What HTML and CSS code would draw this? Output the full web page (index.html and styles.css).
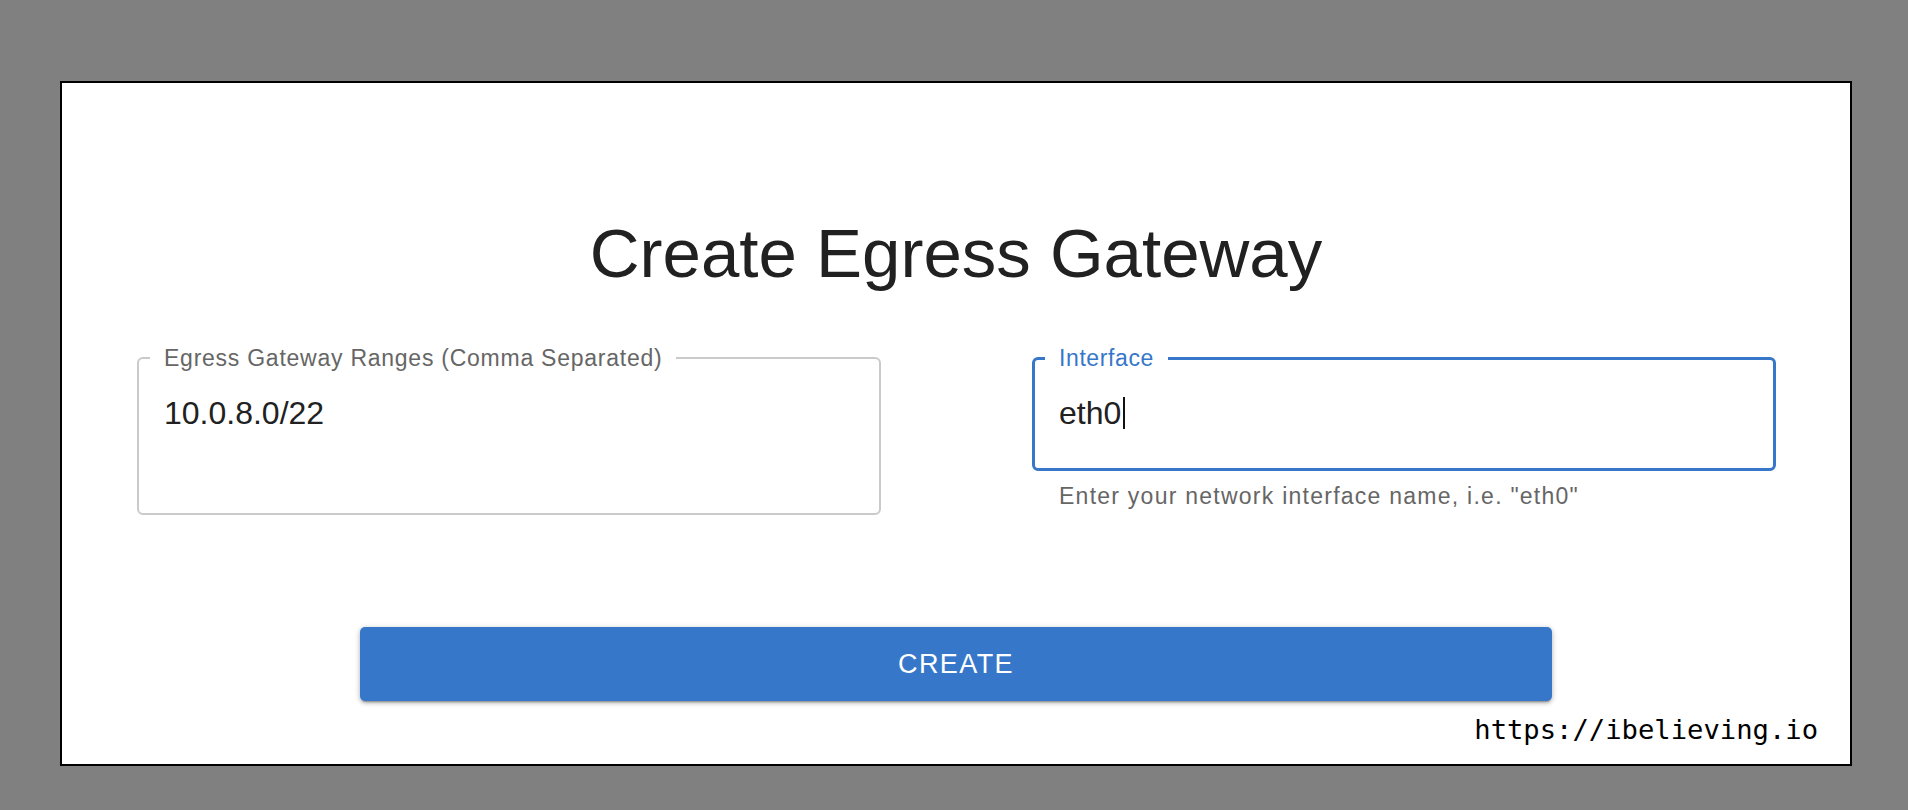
FILE: index.html
```html
<!DOCTYPE html>
<html lang="en">
<head>
<meta charset="utf-8">
<title>Create Egress Gateway</title>
<link rel="stylesheet" href="styles.css">
</head>
<body>
<main class="panel">
  <h1 class="title">Create Egress Gateway</h1>
  <div class="fields">
    <div class="field-wrap">
      <div class="field field-multi">
        <span class="label">Egress Gateway Ranges (Comma Separated)</span>
        <div class="value">10.0.8.0/22</div>
      </div>
    </div>
    <div class="field-wrap">
      <div class="field field-focused">
        <span class="label label-focused">Interface</span>
        <div class="value">eth0<span class="caret"></span></div>
      </div>
      <p class="helper">Enter your network interface name, i.e. "eth0"</p>
    </div>
  </div>
  <div class="actions">
    <button class="btn" type="button">CREATE</button>
  </div>
  <div class="watermark">https://ibelieving.io</div>
</main>
</body>
</html>
```

FILE: styles.css
```css
* { box-sizing: border-box; }

html, body {
  margin: 0;
  padding: 0;
}

body {
  background: #808080;
  width: 1908px;
  height: 810px;
  padding: 81px 56px 0 60px;
  font-family: "Liberation Sans", Arial, Helvetica, sans-serif;
  overflow: hidden;
}

.panel {
  width: 1792px;
  height: 685px;
  background: #fff;
  border: 2px solid #000;
  padding: 136px 32px 0 75px;
  display: flex;
  flex-direction: column;
}

.title {
  margin: 0 -32px 0 -75px;
  font-size: 69px;
  line-height: 70px;
  font-weight: 400;
  color: #212121;
  text-align: center;
}

.fields {
  margin-top: 68px;
  display: flex;
  gap: 151px;
  align-items: flex-start;
  width: 1639px;
}

.field-wrap {
  width: 744px;
  display: flex;
  flex-direction: column;
}

.field {
  position: relative;
  border: 2px solid #cacaca;
  border-radius: 6px;
  padding: 36px 25px 0;
}

.field-multi {
  height: 158px;
}

.field-focused {
  height: 114px;
  border: 3px solid #3677c9;
  padding: 35px 24px 0;
}

.label {
  position: absolute;
  top: -14px;
  left: 11px;
  padding: 0 14px;
  background: #fff;
  font-size: 23px;
  line-height: 26px;
  letter-spacing: 0.75px;
  color: #666;
  white-space: nowrap;
}

.label-focused {
  top: -15px;
  left: 10px;
  color: #3677c9;
  letter-spacing: 0.6px;
}

.value {
  font-size: 32px;
  line-height: 36px;
  color: #212121;
  display: flex;
  align-items: center;
}

.caret {
  display: inline-block;
  width: 2px;
  height: 32px;
  background: #111;
  margin-left: 2px;
}

.helper {
  margin: 12px 0 0;
  padding-left: 27px;
  font-size: 23px;
  line-height: 26px;
  letter-spacing: 1.25px;
  color: #666;
}

.actions {
  margin-top: 112px;
  display: flex;
  justify-content: center;
  margin-left: -75px;
  margin-right: -32px;
}

.btn {
  width: 1192px;
  height: 74px;
  border: none;
  border-radius: 5px;
  background: #3677c9;
  color: #fff;
  font-family: "Liberation Sans", Arial, Helvetica, sans-serif;
  font-size: 27px;
  letter-spacing: 1.4px;
  box-shadow: 0 3px 2px -2px rgba(0,0,0,0.3), 0 2px 4px rgba(0,0,0,0.2), 0 1px 7px rgba(0,0,0,0.14);
  cursor: pointer;
}

.watermark {
  margin-top: 13px;
  align-self: flex-end;
  font-family: "DejaVu Sans Mono", "Liberation Mono", monospace;
  font-size: 27.2px;
  line-height: 32px;
  color: #000;
}
```
